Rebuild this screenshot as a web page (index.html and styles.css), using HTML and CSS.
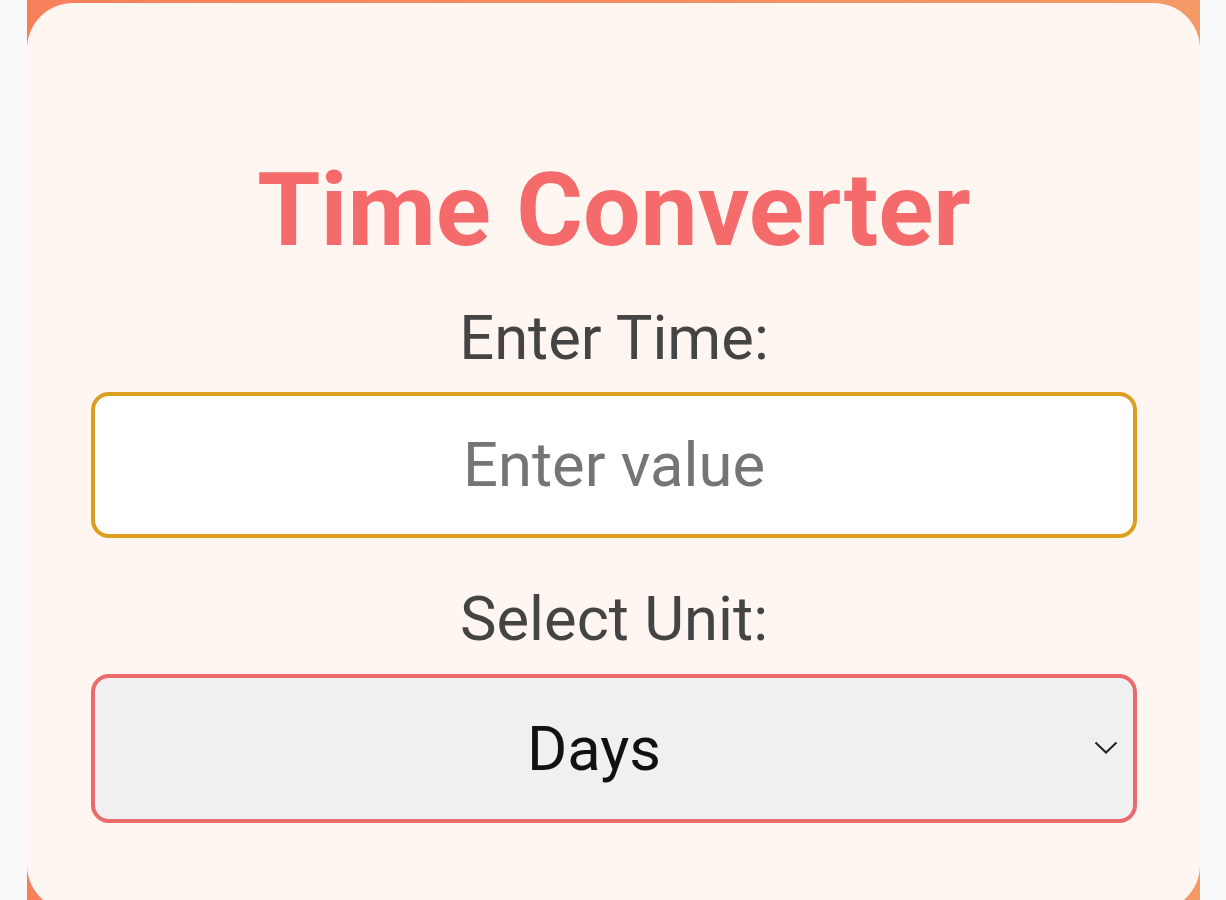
FILE: index.html
```html
<!DOCTYPE html>
<html lang="en">
<head>
<meta charset="utf-8">
<title>Time Converter</title>
<link rel="stylesheet" href="styles.css">
</head>
<body>
<div class="frame">
  <main class="card">
    <h1 class="title">Time Converter</h1>
    <label class="label" for="time">Enter Time:</label>
    <input class="field" id="time" type="text" placeholder="Enter value">
    <label class="label label-unit" for="unit">Select Unit:</label>
    <div class="select-wrap">
      <select class="select" id="unit">
        <option>Days</option>
        <option>Hours</option>
        <option>Minutes</option>
        <option>Seconds</option>
      </select>
      <svg class="chevron" viewBox="0 0 24 14" width="24" height="14" aria-hidden="true">
        <path d="M1.5 1.5 L12 11.5 L22.5 1.5" fill="none" stroke="#222" stroke-width="2"/>
      </svg>
    </div>
  </main>
</div>
</body>
</html>
```

FILE: styles.css
```css
html, body {
  margin: 0;
  padding: 0;
  height: 100%;
  overflow: hidden;
}
body {
  background: #f9f9f9;
  font-family: Roboto, "Liberation Sans", sans-serif;
}
.frame {
  margin: 0 26px 0 27px;
  height: 100%;
  background: linear-gradient(90deg, #f7805a 0%, #f39063 60%, #f39a66 100%);
  padding-top: 3px;
  box-sizing: border-box;
}
.card {
  background: #fff5f1;
  border-radius: 46px;
  height: 908px;
  box-sizing: border-box;
  padding: 152px 63px 0 64px;
  display: flex;
  flex-direction: column;
  align-items: stretch;
  text-align: center;
}
.title {
  margin: 0;
  font-size: 102px;
  line-height: 110px;
  font-weight: 700;
  color: #f56b6b;
}
.label {
  display: block;
  font-size: 61.5px;
  line-height: 70px;
  color: #444;
  margin-top: 38px;
  margin-bottom: 19px;
}
.label-unit {
  margin-top: 46px;
  margin-bottom: 20px;
}
.field {
  display: block;
  box-sizing: border-box;
  width: 100%;
  height: 146px;
  border: 4px solid #dc9e1e;
  border-radius: 18px;
  background: #fff;
  font-family: inherit;
  font-size: 61.5px;
  text-align: center;
  color: #222;
  outline: none;
}
.field::placeholder {
  color: #757575;
}
.select-wrap {
  position: relative;
}
.select {
  display: block;
  box-sizing: border-box;
  width: 100%;
  height: 149px;
  border: 4px solid #e96b6b;
  border-radius: 18px;
  background: #f0f0f0;
  font-family: inherit;
  font-size: 61.5px;
  color: #111;
  padding: 0 40px 0 0;
  -webkit-appearance: none;
  appearance: none;
  text-align: center;
  text-align-last: center;
  outline: none;
}
.chevron {
  position: absolute;
  right: 19px;
  top: 67px;
}
```
